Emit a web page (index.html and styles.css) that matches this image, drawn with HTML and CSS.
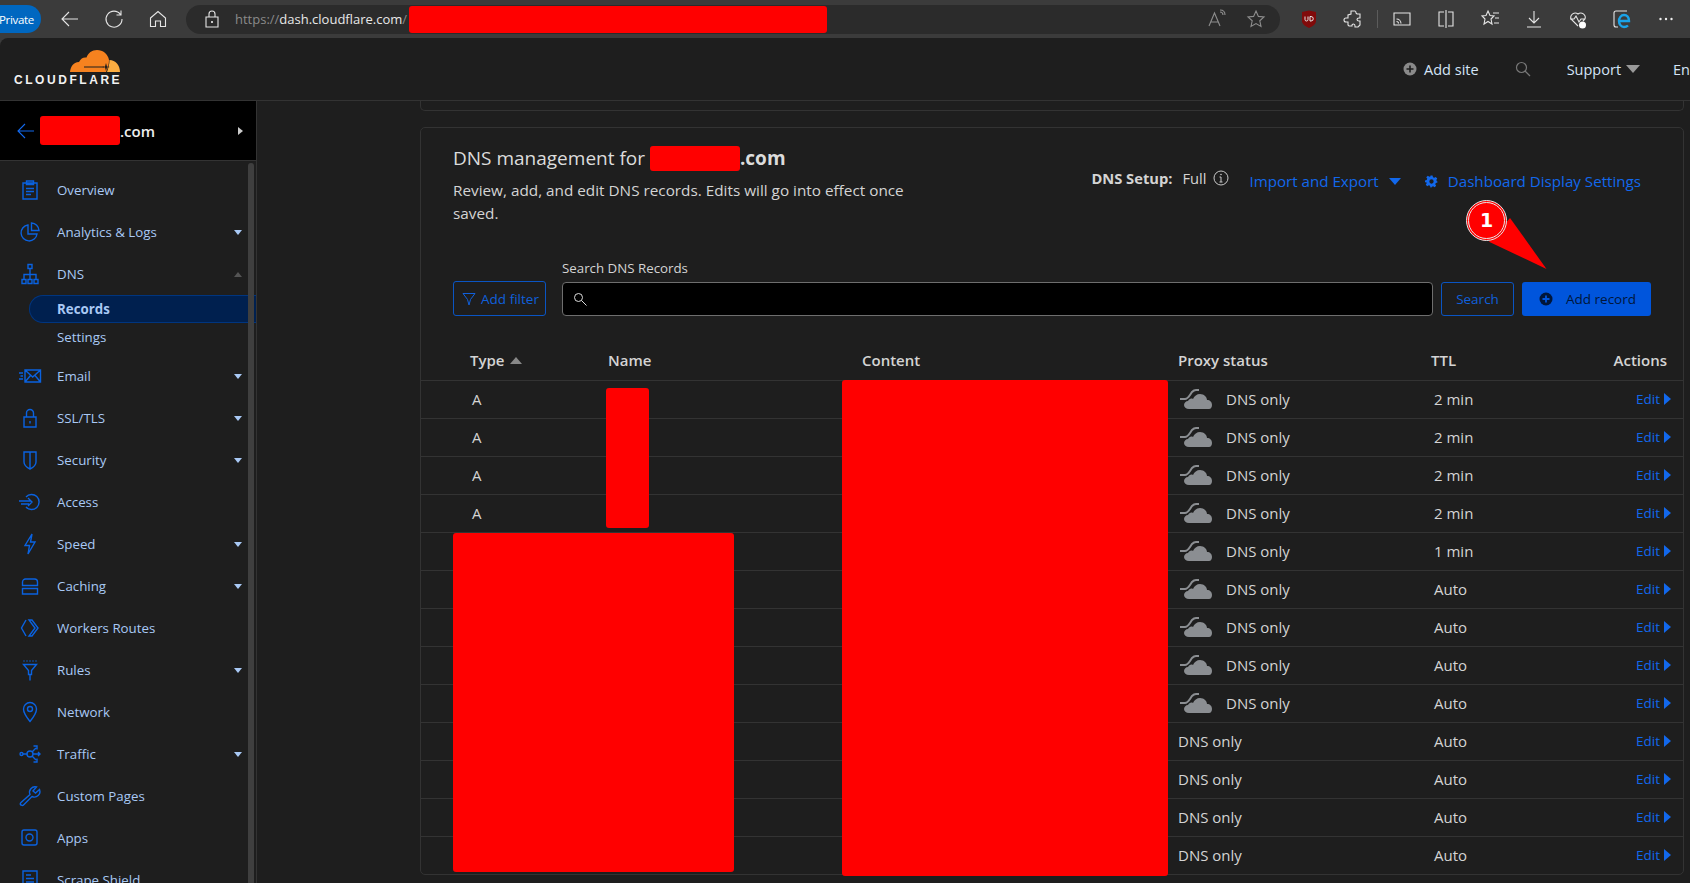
FILE: index.html
```html
<!DOCTYPE html>
<html lang="en">
<head>
<meta charset="UTF-8">
<title>DNS management | Cloudflare</title>
<link rel="stylesheet" href="styles.css">
</head>
<body>

<svg class="sprites" width="0" height="0">
  <symbol id="dns-cloud" viewBox="0 0 34 22">
    <path d="M10 22c-3 0-5-2-5-4s2-4 4-4c1-2 3-3 5-2 1-3 4-5 7-5 4 0 7 3 7 6 3 0 5 2 5 5 0 2-1 4-3 4z" fill="#8b8e92"/>
    <path d="M1 12h5c2 0 3-1 5-4l2-3c1-1 2-2 4-2h3" fill="none" stroke="#8b8e92" stroke-width="2"/>
  </symbol>
</svg>

<div class="browser-bar">
  <div class="private-pill">Private</div>
  <div class="tool"><svg width="20" height="20" viewBox="0 0 20 20"><path d="M18 10H2M9 3l-7 7 7 7"/></svg></div>
  <div class="tool"><svg width="20" height="20" viewBox="0 0 20 20"><path d="M16.500 5.500A8 8 0 1 0 18 10M17 1.500v4.500h-4.500"/></svg></div>
  <div class="tool"><svg width="20" height="20" viewBox="0 0 20 20"><path d="M2.500 9 10 2.500 17.500 9v8.500h-5V12h-5v5.500h-5z"/></svg></div>
  <div class="address">
    <svg class="lock" width="16" height="18" viewBox="0 0 16 18"><path d="M2 7h12v10H2zM5 7V4a3 3 0 0 1 6 0v3"/><circle cx="8" cy="12" r="1" fill="#fff" stroke="none"/></svg>
    <span class="url"><span class="url-scheme">https://</span>dash.cloudflare.com<span class="url-scheme">/</span></span>
    <span class="redact redact-url"></span>
    <svg class="addr-icon" width="20" height="20" viewBox="0 0 20 20"><path d="M2 17 7.500 4 13 17M4 13h7M13 3c2 0 3 1 3 3M13 1c3 0 5 2 5 5"/></svg>
    <svg class="addr-icon" width="20" height="20" viewBox="0 0 20 20"><path d="m10 2 2.400 5.400 5.600.6-4.200 3.800 1.200 5.700-5-2.900-5 2.900 1.200-5.700L2 8l5.600-.6z"/></svg>
  </div>
  <div class="tool">
    <svg width="18" height="20" viewBox="0 0 18 20"><path d="M2 3l7-1.500L16 3v9c0 3-3 5-7 7-4-2-7-4-7-7z" fill="#800a0a" stroke="none"/><path d="M5 7.500v3a1.500 1.500 0 0 0 3 0v-3M10 7.500v4.500h1a2.250 2.250 0 0 0 0-4.500z" stroke-width="1"/></svg>
  </div>
  <div class="tool"><svg width="20" height="20" viewBox="0 0 20 20"><path d="M8 2h4c1 0 1 1 1 2l1 1h3v4h-1c-1 0-2 .5-2 1.500s1 1.500 2 1.500h1v4l-2 2h-3v-1c0-1-.5-2-1.500-2S9 15 9 16v1H6l-1-1v-3H3c-1 0-2-1-2-2s1-2 2-2h2V6l3-1z"/></svg></div>
  <div class="tool-divider"></div>
  <div class="tool"><svg width="20" height="20" viewBox="0 0 20 20"><path d="M2 4h16v12H2zM4.500 10a4.500 4.500 0 0 1 4.500 4.500M4.500 12.500a2 2 0 0 1 2 2"/></svg></div>
  <div class="tool"><svg width="20" height="20" viewBox="0 0 20 20"><path d="M8 3H3v14h5M12 3h5v14h-5M10 1v18"/></svg></div>
  <div class="tool"><svg width="20" height="20" viewBox="0 0 20 20"><path d="m8 2 2 4.500 4 .5-3 3 1 5-4-2.500L4 15l1-5-3-3 4-.5zM13 4h6M15 9h4M14 14h5"/></svg></div>
  <div class="tool"><svg width="20" height="20" viewBox="0 0 20 20"><path d="M10 2v12M5 9l5 5 5-5M3 18h14"/></svg></div>
  <div class="tool"><svg width="20" height="20" viewBox="0 0 20 20"><path d="M10 17 3 10a4.500 4.500 0 0 1 7-5 4.500 4.500 0 0 1 7 5l-2 2M2 10h4l2-3 3 6 2-3h4"/><circle cx="14.500" cy="16" r="3.500" fill="#fff" stroke="none"/></svg></div>
  <div class="tool"><svg width="20" height="20" viewBox="0 0 20 20"><path d="M6 18H4a2 2 0 0 1-2-2V4a2 2 0 0 1 2-2h11"/><path d="M8 12h9c0-4-2-6-5-6s-5 3-5 6 2 6 5 6c2 0 3-.5 4-1.500" stroke="#1aa3e8" stroke-width="2.400"/></svg></div>
  <div class="tool"><svg width="16" height="4" viewBox="0 0 16 4"><circle cx="2.500" cy="2" r="1.200" fill="#eee" stroke="none"/><circle cx="8" cy="2" r="1.200" fill="#eee" stroke="none"/><circle cx="13.500" cy="2" r="1.200" fill="#eee" stroke="none"/></svg></div>
</div>

<div class="page">
  <header class="topnav">
    <div class="logo">
      <svg width="50" height="22" viewBox="0 0 50 22">
        <path d="M0 22c.5-5 3-9.500 9-10 2-4 4.500-5 7.500-4.500C18 3 22 0 27 0c6 0 11 4 12 10 0 4-1 8-3 12z" fill="#f6821f"/>
        <path d="M39.500 10C45.500 10 50 15 50 22H37c1.500-4 2.500-8 2.500-12z" fill="#fbad41"/>
        <path d="M14 17h20" stroke="#1e1e1e" stroke-width="1"/>
        <path d="m36 13 1 3.500 3 .5-3 .5-1 3.500-1-3.500-3-.5 3-.5z" fill="#1e1e1e"/>
      </svg>
      <span class="logo-text">CLOUDFLARE</span>
    </div>
    <div class="topnav-links">
      <span class="topnav-item"><svg width="14" height="14" viewBox="0 0 14 14"><circle cx="7" cy="7" r="6.500" fill="#8a8a8a"/><path d="M7 3.500v7M3.500 7h7" stroke="#1e1e1e" stroke-width="1.600"/></svg>Add site</span>
      <svg class="topnav-search" width="16" height="16" viewBox="0 0 16 16"><circle cx="6.500" cy="6.500" r="5"/><path d="m10 10 5 5"/></svg>
      <span class="topnav-item">Support<i class="caret-down"></i></span>
      <span class="topnav-lang">En</span>
    </div>
  </header>

  <div class="layout">
    <aside class="sidebar">
      <div class="zone-head">
        <svg width="18" height="16" viewBox="0 0 18 16"><path d="M17 8H1M8 1 1 8l7 7"/></svg>
        <span class="zone-name"><span class="redact redact-zone"></span>.com</span>
        <i class="caret-right"></i>
      </div>
      <nav class="nav">
        <a class="nav-item"><svg viewBox="0 0 24 24"><path d="M5 5h14v16H5zM8.500 3h7v3.500h-7zM8 10.500h8M8 13.500h8M8 16.500h5"/></svg><span>Overview</span></a>
        <a class="nav-item has-sub"><svg viewBox="0 0 24 24"><path d="M10 5a8 8 0 1 0 9 9h-9zM13.500 3v7.500H21A8 8 0 0 0 13.500 3z"/></svg><span>Analytics &amp; Logs</span></a>
        <a class="nav-item has-sub is-open"><svg viewBox="0 0 24 24"><path d="M10 2.500h4v4h-4zM4 17.500h4v4H4zM10 17.500h4v4h-4zM16 17.500h4v4h-4zM12 6.500v11M6 17.500v-5h12v5"/></svg><span>DNS</span></a>
        <div class="subnav">
          <a class="sub-item is-active">Records</a>
          <a class="sub-item">Settings</a>
        </div>
        <a class="nav-item has-sub"><svg viewBox="0 0 24 24"><path d="M7 6h15.500v12H7zM7 6l7.700 7L22.500 6M7 18l5.500-6.500M22.500 18 17 11.500M1 9h4M2.500 12H5M1 15h4"/></svg><span>Email</span></a>
        <a class="nav-item has-sub"><svg viewBox="0 0 24 24"><path d="M6 11h12v10H6zM8.500 11V7a3.500 3.500 0 0 1 7 0v4M12 15v2.500"/></svg><span>SSL/TLS</span></a>
        <a class="nav-item has-sub"><svg viewBox="0 0 24 24"><path d="M6 4h12v10c0 3-3 5.500-6 7-3-1.500-6-4-6-7zM12 4v17"/></svg><span>Security</span></a>
        <a class="nav-item"><svg viewBox="0 0 24 24"><path d="M8 7a7.500 7.500 0 1 1 0 10M1 11h12M3 14h8M10 8l4 4-4 4"/></svg><span>Access</span></a>
        <a class="nav-item has-sub"><svg viewBox="0 0 24 24"><path d="M14 2 7 13.500h4.500L10 22l7-12h-4.500z"/></svg><span>Speed</span></a>
        <a class="nav-item has-sub"><svg viewBox="0 0 24 24"><path d="M4.500 11.500V8a3 3 0 0 1 3-3h9a3 3 0 0 1 3 3v3.500zM4.500 14.500h15V20h-15z"/></svg><span>Caching</span></a>
        <a class="nav-item"><svg viewBox="0 0 24 24"><path d="M8 4 3.500 12 8 20M11 4h3l6 8-6 8h-3l6-8z"/></svg><span>Workers Routes</span></a>
        <a class="nav-item has-sub"><svg viewBox="0 0 24 24"><path d="M5.500 3h1M8.500 3h1M11.500 3h1M14.500 3h1M17.500 3h1M5.500 6.500h13l-5 6v4h-3v-4zM12 16.500v6"/></svg><span>Rules</span></a>
        <a class="nav-item"><svg viewBox="0 0 24 24"><path d="M12 2.500a6.500 6.500 0 0 0-6.500 6.500c0 4.500 6.500 12.500 6.500 12.500S18.500 13.500 18.500 9A6.500 6.500 0 0 0 12 2.500z"/><circle cx="12" cy="9" r="2.500"/></svg><span>Network</span></a>
        <a class="nav-item has-sub"><svg viewBox="0 0 24 24"><circle cx="3.500" cy="12" r="1.500"/><circle cx="12" cy="12" r="3"/><path d="M5 12h4M14 10l4-4M14 14l4 4M15 12h7M20 10l2 2-2 2M15.500 4H19v3.500M15.500 20H19v-3.500"/></svg><span>Traffic</span></a>
        <a class="nav-item"><svg viewBox="0 0 24 24"><path d="M21.500 5.500 17.500 9 15 7l3.500-4a5.500 5.500 0 0 0-6.500 7.500L3 18.500c-1 1-1 2 0 2.500s1.500 1 2.500 0l8.500-8.500a5.500 5.500 0 0 0 7.500-7z"/></svg><span>Custom Pages</span></a>
        <a class="nav-item"><svg viewBox="0 0 24 24"><rect x="4" y="4" width="15" height="15" rx="2"/><circle cx="11.500" cy="11.500" r="3.500"/></svg><span>Apps</span></a>
        <a class="nav-item"><svg viewBox="0 0 24 24"><path d="M5 3h14v18H5zM8 7h5M8 10.500h8M8 14h8"/></svg><span>Scrape Shield</span></a>
      </nav>
      <div class="sidebar-thumb"></div>
    </aside>

    <main class="content">
      <div class="card card-clipped"></div>

      <section class="card card-dns">
        <div class="card-head">
          <div class="card-intro">
            <h2>DNS management for <span class="redact redact-title"></span><b>.com</b></h2>
            <p>Review, add, and edit DNS records. Edits will go into effect once saved.</p>
          </div>
          <div class="card-actions">
            <span class="setup"><b>DNS Setup:</b> Full
              <svg width="16" height="16" viewBox="0 0 16 16"><circle cx="8" cy="8" r="7"/><path d="M8 7v5M6.500 12h3M6.500 7H8"/><circle cx="8" cy="4.500" r=".8" fill="#c9c9c9" stroke="none"/></svg>
            </span>
            <a class="link">Import and Export<i class="caret-blue"></i></a>
            <a class="link link-gear">
              <svg width="13" height="13" viewBox="0 0 24 24"><path d="M10 1h4l.7 3.200 2.300 1 2.800-1.700 2.800 2.800-1.700 2.800 1 2.300L23 12v0l0 2-3.100.7-1 2.300 1.700 2.800-2.800 2.800-2.800-1.700-2.300 1L12 23h-2l-.7-3.100-2.300-1-2.800 1.700-2.800-2.800 1.700-2.800-1-2.300L0 14v-4l3.100-.7 1-2.300-1.700-2.800 2.800-2.800 2.800 1.700 2.300-1zM12 8a4 4 0 1 0 0 8 4 4 0 0 0 0-8z" fill="#1268ec" fill-rule="evenodd"/></svg>
              Dashboard Display Settings</a>
          </div>
        </div>

        <div class="filters">
          <button class="btn btn-outline btn-filter"><svg width="14" height="14" viewBox="0 0 14 14"><path d="M1 1.500h12L8.500 7.500 7 13 5.500 7.500z"/></svg>Add filter</button>
          <div class="search-field">
            <label for="dns-search">Search DNS Records</label>
            <div class="search-box">
              <svg width="14" height="14" viewBox="0 0 14 14"><circle cx="5.500" cy="5.500" r="4"/><path d="m8.500 8.500 5 5"/></svg>
              <input id="dns-search" type="text">
            </div>
          </div>
          <button class="btn btn-outline btn-search">Search</button>
          <button class="btn btn-primary"><svg width="14" height="14" viewBox="0 0 14 14"><circle cx="7" cy="7" r="6.500" fill="#00163a"/><path d="M7 3.500v7M3.500 7h7" stroke="#0055dc" stroke-width="1.800"/></svg>Add record</button>
        </div>

        <table class="records">
          <thead>
            <tr>
              <th class="col-type">Type<i class="caret-sort"></i></th>
              <th class="col-name">Name</th>
              <th class="col-content">Content</th>
              <th class="col-proxy">Proxy status</th>
              <th class="col-ttl">TTL</th>
              <th class="col-actions">Actions</th>
            </tr>
          </thead>
          <tbody>
            <tr><td class="cell-type">A</td><td></td><td></td><td><svg class="cloud"><use href="#dns-cloud"/></svg>DNS only</td><td class="cell-ttl">2 min</td><td class="cell-edit"><a>Edit</a><i class="caret-edit"></i></td></tr>
            <tr><td class="cell-type">A</td><td></td><td></td><td><svg class="cloud"><use href="#dns-cloud"/></svg>DNS only</td><td class="cell-ttl">2 min</td><td class="cell-edit"><a>Edit</a><i class="caret-edit"></i></td></tr>
            <tr><td class="cell-type">A</td><td></td><td></td><td><svg class="cloud"><use href="#dns-cloud"/></svg>DNS only</td><td class="cell-ttl">2 min</td><td class="cell-edit"><a>Edit</a><i class="caret-edit"></i></td></tr>
            <tr><td class="cell-type">A</td><td></td><td></td><td><svg class="cloud"><use href="#dns-cloud"/></svg>DNS only</td><td class="cell-ttl">2 min</td><td class="cell-edit"><a>Edit</a><i class="caret-edit"></i></td></tr>
            <tr><td class="cell-type"></td><td></td><td></td><td><svg class="cloud"><use href="#dns-cloud"/></svg>DNS only</td><td class="cell-ttl">1 min</td><td class="cell-edit"><a>Edit</a><i class="caret-edit"></i></td></tr>
            <tr><td class="cell-type"></td><td></td><td></td><td><svg class="cloud"><use href="#dns-cloud"/></svg>DNS only</td><td class="cell-ttl">Auto</td><td class="cell-edit"><a>Edit</a><i class="caret-edit"></i></td></tr>
            <tr><td class="cell-type"></td><td></td><td></td><td><svg class="cloud"><use href="#dns-cloud"/></svg>DNS only</td><td class="cell-ttl">Auto</td><td class="cell-edit"><a>Edit</a><i class="caret-edit"></i></td></tr>
            <tr><td class="cell-type"></td><td></td><td></td><td><svg class="cloud"><use href="#dns-cloud"/></svg>DNS only</td><td class="cell-ttl">Auto</td><td class="cell-edit"><a>Edit</a><i class="caret-edit"></i></td></tr>
            <tr><td class="cell-type"></td><td></td><td></td><td><svg class="cloud"><use href="#dns-cloud"/></svg>DNS only</td><td class="cell-ttl">Auto</td><td class="cell-edit"><a>Edit</a><i class="caret-edit"></i></td></tr>
            <tr><td class="cell-type"></td><td></td><td></td><td>DNS only</td><td class="cell-ttl">Auto</td><td class="cell-edit"><a>Edit</a><i class="caret-edit"></i></td></tr>
            <tr><td class="cell-type"></td><td></td><td></td><td>DNS only</td><td class="cell-ttl">Auto</td><td class="cell-edit"><a>Edit</a><i class="caret-edit"></i></td></tr>
            <tr><td class="cell-type"></td><td></td><td></td><td>DNS only</td><td class="cell-ttl">Auto</td><td class="cell-edit"><a>Edit</a><i class="caret-edit"></i></td></tr>
            <tr><td class="cell-type"></td><td></td><td></td><td>DNS only</td><td class="cell-ttl">Auto</td><td class="cell-edit"><a>Edit</a><i class="caret-edit"></i></td></tr>
          </tbody>
        </table>

        <!-- redaction blocks and the callout sit over the card -->
        <div class="cover cover-name"></div>
        <div class="cover cover-wide"></div>
        <div class="cover cover-content"></div>
        <svg class="callout-arrow" width="70" height="60" viewBox="0 0 70 60"><path d="M24 5 60.500 56 3 28.700z" fill="#f00"/></svg>
        <div class="callout-badge">1</div>
      </section>
    </main>
  </div>
</div>

</body>
</html>
```

FILE: styles.css
```css
* {
  box-sizing: border-box;
}

html, body {
  height: 100%;
}

body {
  margin: 0;
  overflow: hidden;
  background: #3b3b3b;
  color: #d4d4d4;
  font-family: "Open Sans", "Noto Sans", sans-serif;
  font-size: 14px;
}

a {
  cursor: pointer;
}

.sprites {
  position: absolute;
}

.redact {
  display: inline-block;
  background: #f00;
  border-radius: 3px;
}

/* browser chrome */
.browser-bar {
  display: flex;
  align-items: center;
  height: 38px;
}

.browser-bar svg {
  fill: none;
  stroke: #e6e6e6;
  stroke-width: 1.1;
}

.private-pill {
  display: flex;
  align-items: center;
  justify-content: flex-end;
  width: 41px;
  height: 28px;
  margin-right: 7px;
  padding-right: 7px;
  border-radius: 0 14px 14px 0;
  background: #0067c0;
  color: #fff;
  font-size: 11.500px;
  letter-spacing: -0.3px;
  white-space: nowrap;
  overflow: hidden;
}

.tool {
  display: flex;
  align-items: center;
  justify-content: center;
  flex: none;
  width: 44px;
  height: 38px;
}

.tool-divider {
  flex: none;
  width: 1px;
  height: 18px;
  margin: 0 2px;
  background: #5c5c5c;
}

.address {
  display: flex;
  align-items: center;
  flex: none;
  width: 1094px;
  height: 29px;
  margin: 0 7px 0 6px;
  padding-left: 18px;
  border-radius: 15px;
  background: #2b2b2b;
}

.lock {
  margin-right: 15px;
}

.url {
  color: #e8e8e8;
  font-size: 13px;
  white-space: nowrap;
}

.url-scheme {
  color: #8a8a8a;
}

.redact-url {
  width: 418px;
  height: 27px;
  margin-left: 2px;
}

.address .addr-icon {
  margin-left: 19px;
  stroke: #8d8d8d;
}

.address .redact-url + .addr-icon {
  margin-left: auto;
}

.address .addr-icon:last-child {
  margin-right: 14px;
}

/* page */
.page {
  display: flex;
  flex-direction: column;
  height: 845px;
  border-top-left-radius: 8px;
  background: #1e1e1e;
  overflow: hidden;
}

.topnav {
  display: flex;
  align-items: center;
  justify-content: space-between;
  flex: none;
  height: 63px;
  padding-left: 14px;
  border-bottom: 1px solid #333;
}

.logo {
  display: flex;
  flex-direction: column;
  align-items: flex-end;
  margin-top: -4px;
}

.logo-text {
  margin-top: 3px;
  margin-right: -2px;
  color: #f2f2f2;
  font-family: "Liberation Sans", sans-serif;
  font-size: 12px;
  font-weight: 700;
  line-height: 10px;
  letter-spacing: 2.550px;
}

.topnav-links {
  display: flex;
  align-items: center;
  color: #d4e4f7;
  font-size: 14.500px;
}

.topnav-item {
  display: flex;
  align-items: center;
  gap: 7px;
}

.topnav-search {
  margin: 0 36px;
  fill: none;
  stroke: #777;
  stroke-width: 1.2;
}

.topnav-lang {
  margin-left: 33px;
}

.caret-down {
  width: 0;
  height: 0;
  margin-left: -2px;
  border-left: 7px solid transparent;
  border-right: 7px solid transparent;
  border-top: 8px solid #999;
}

.layout {
  display: flex;
  flex: 1;
  min-height: 0;
}

/* sidebar */
.sidebar {
  position: relative;
  flex: none;
  width: 257px;
  border-right: 1px solid #333;
  overflow: hidden;
}

.zone-head {
  display: flex;
  align-items: center;
  height: 60px;
  padding-left: 17px;
  border-bottom: 1px solid #333;
  background: #000;
  color: #eee;
  font-weight: 600;
  font-size: 15px;
}

.zone-head svg {
  flex: none;
  margin-right: 5px;
  fill: none;
  stroke: #1268ec;
  stroke-width: 1.1;
}

.zone-name {
  display: flex;
  align-items: center;
}

.redact-zone {
  width: 80px;
  height: 29px;
}

.caret-right {
  margin-left: auto;
  margin-right: 13px;
  border-top: 4px solid transparent;
  border-bottom: 4px solid transparent;
  border-left: 5px solid #ccc;
}

.nav {
  padding-top: 8px;
}

.nav-item {
  display: flex;
  align-items: center;
  height: 42px;
  padding-left: 18px;
  color: #a9c9f5;
  font-size: 13.300px;
}

.nav-item svg {
  flex: none;
  width: 24px;
  height: 24px;
  margin-right: 15px;
  fill: none;
  stroke: #0a62e0;
  stroke-width: 1.4;
}

.has-sub::after {
  content: "";
  margin-left: auto;
  margin-right: 14px;
  border-left: 4px solid transparent;
  border-right: 4px solid transparent;
  border-top: 5px solid #a9c9f5;
}

.has-sub.is-open::after {
  border-top: 0;
  border-bottom: 5px solid #555;
}

.subnav {
  display: flex;
  flex-direction: column;
  height: 60px;
}

.sub-item {
  display: flex;
  align-items: center;
  height: 28px;
  margin-left: 29px;
  padding-left: 28px;
  color: #a9c9f5;
  font-size: 13.300px;
}

.sub-item.is-active {
  height: 28px;
  border: 1px solid #00357f;
  border-right: 0;
  border-radius: 14px 0 0 14px;
  padding-left: 27px;
  background: #00204f;
  font-weight: 700;
}

.sidebar-thumb {
  position: absolute;
  top: 62px;
  bottom: 0;
  left: 248px;
  width: 6px;
  border-radius: 3px 3px 0 0;
  background: #3f3f3f;
}

/* main column */
.content {
  flex: 1;
  min-width: 0;
  padding: 0 6px 0 163px;
}

.card {
  border: 1px solid #333;
  border-radius: 5px;
}

.card-clipped {
  height: 10px;
  border-top: 0;
  border-radius: 0 0 5px 5px;
}

.card-dns {
  position: relative;
  margin-top: 16px;
  padding-top: 18px;
}

.card-head {
  display: flex;
  justify-content: space-between;
  padding: 0 42px 0 32px;
}

.card-intro {
  width: 470px;
}

.card-intro h2 {
  margin: 0;
  color: #dcdcdc;
  font-size: 19px;
  font-weight: 400;
  line-height: 25px;
}

.card-intro h2 b {
  font-weight: 700;
}

.redact-title {
  width: 90px;
  height: 25px;
  vertical-align: top;
}

.card-intro p {
  margin: 8px 0 0;
  font-size: 15.300px;
  line-height: 23px;
}

.card-actions {
  display: flex;
  align-items: center;
  height: 24px;
  margin-top: 23px;
}

.setup {
  display: flex;
  align-items: center;
  gap: 7px;
  margin: 0 20px 6px 0;
  font-size: 14.700px;
}

.setup b {
  margin-right: 3px;
}

.setup svg {
  fill: none;
  stroke: #c9c9c9;
}

.link {
  display: flex;
  align-items: center;
  color: #1268ec;
  font-size: 15.150px;
}

.caret-blue {
  width: 0;
  height: 0;
  margin: 0 24px 0 10px;
  border-left: 6px solid transparent;
  border-right: 6px solid transparent;
  border-top: 7px solid #1268ec;
}

.link-gear svg {
  margin-right: 10px;
}

.filters {
  display: flex;
  align-items: flex-end;
  margin-top: 34px;
  padding-left: 32px;
}

.btn {
  display: flex;
  align-items: center;
  justify-content: center;
  height: 34px;
  border-radius: 3px;
  font-family: inherit;
  font-size: 13.500px;
}

.btn-outline {
  border: 1px solid #0a55c4;
  background: transparent;
  color: #1060dc;
}

.btn-filter {
  gap: 5px;
  width: 93px;
  height: 35px;
  margin-right: 16px;
  padding: 0 0 0 2px;
}

.btn-filter svg {
  fill: none;
  stroke: #1060dc;
}

.search-field {
  width: 871px;
  margin-right: 8px;
}

.search-field label {
  display: block;
  margin-bottom: 5px;
  font-size: 13.300px;
  line-height: 18px;
}

.search-box {
  display: flex;
  align-items: center;
  height: 34px;
  padding-left: 10px;
  border: 1px solid #6e6e6e;
  border-radius: 4px;
  background: #000;
}

.search-box svg {
  flex: none;
  fill: none;
  stroke: #ddd;
  stroke-width: 1;
}

.search-box input {
  flex: 1;
  border: 0;
  outline: 0;
  background: transparent;
}

.btn-search {
  width: 73px;
  margin-right: 8px;
  background: transparent;
}

.btn-primary {
  gap: 13px;
  width: 129px;
  padding-left: 8px;
  border: 0;
  background: #0055dc;
  color: #00163a;
}

/* records table */
.records {
  width: 100%;
  margin-top: 25px;
  border-collapse: collapse;
  table-layout: fixed;
}

.records th,
.records td {
  height: 38px;
  padding: 0 0 0 16px;
  font-size: 15px;
  text-align: left;
  white-space: nowrap;
}

.records th {
  height: 39px;
  color: #d4d4d4;
  font-weight: 600;
}

.records td {
  border-top: 1px solid #333;
}

.col-type { width: 171px; }
.col-name { width: 254px; }
.col-content { width: 316px; }
.col-proxy { width: 253px; }
.col-ttl { width: 150px; }

.records .col-type {
  padding-left: 49px;
}

.records .col-actions {
  padding-right: 16px;
  text-align: right;
}

.records .cell-type {
  padding-left: 51px;
}

.records .cell-ttl {
  padding-left: 19px;
}

.records .cell-edit {
  padding-right: 12px;
  color: #1268ec;
  font-size: 13.500px;
  text-align: right;
}

.caret-sort {
  display: inline-block;
  margin-left: 6px;
  vertical-align: 2px;
  border-left: 6px solid transparent;
  border-right: 6px solid transparent;
  border-bottom: 7px solid #888;
}

.caret-edit {
  display: inline-block;
  margin-left: 4px;
  vertical-align: -1px;
  border-top: 6px solid transparent;
  border-bottom: 6px solid transparent;
  border-left: 7px solid #1268ec;
}

.cloud {
  width: 34px;
  height: 22px;
  margin: -9px 13px -3px 1px;
  vertical-align: middle;
}

/* overlays */
.cover {
  position: absolute;
  background: #f00;
  border-radius: 3px;
}

.cover-name {
  top: 260px;
  left: 185px;
  width: 43px;
  height: 140px;
}

.cover-wide {
  top: 405px;
  left: 32px;
  width: 281px;
  height: 339px;
}

.cover-content {
  top: 252px;
  left: 421px;
  width: 326px;
  height: 496px;
}

.callout-arrow {
  position: absolute;
  top: 85px;
  left: 1065px;
}

.callout-badge {
  position: absolute;
  top: 72px;
  left: 1045px;
  width: 41px;
  height: 41px;
  border: 3px double #e8e8e8;
  border-radius: 50%;
  background: #f00;
  color: #fff;
  font-family: "DejaVu Sans", sans-serif;
  font-size: 19px;
  font-weight: 700;
  line-height: 35px;
  text-align: center;
}
```
